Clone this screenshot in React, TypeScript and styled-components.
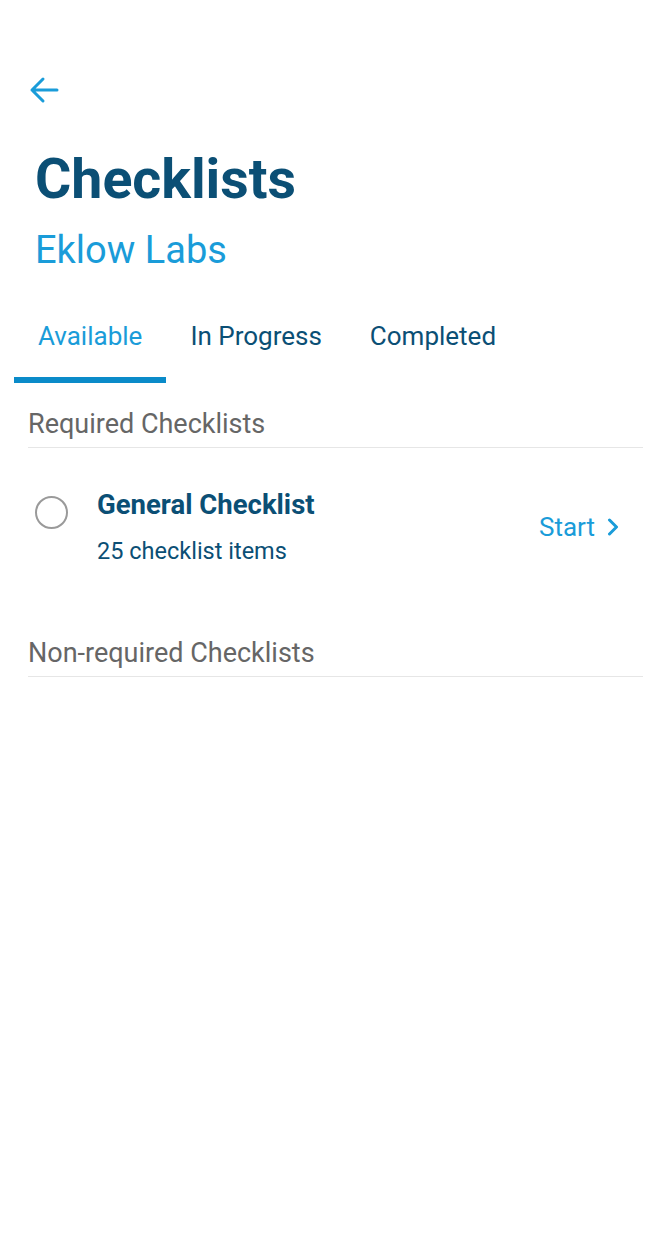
import React, { useState } from "react";
import styled, { createGlobalStyle } from "styled-components";

const GlobalStyle = createGlobalStyle`
  html, body {
    margin: 0;
    padding: 0;
    background: #fff;
  }

  body {
    font-family: Roboto, "Noto Sans", "Liberation Sans", sans-serif;
  }
`;

const Page = styled.div`
  display: flex;
  flex-direction: column;
  width: 670px;
  min-height: 1242px;
  background: #fff;
`;

const Header = styled.header`
  display: flex;
  flex-direction: column;
  padding: 76px 0 0 35px;
`;

const BackButton = styled.button`
  display: flex;
  align-items: center;
  justify-content: center;
  width: 32px;
  height: 28px;
  margin-left: -7px;
  padding: 0;
  border: none;
  background: none;
  cursor: pointer;
`;

const Title = styled.h1`
  margin: 44px 0 0;
  font-size: 55.5px;
  line-height: 64px;
  font-weight: 700;
  color: #0b4f75;
`;

const Subtitle = styled.h2`
  margin: 16px 0 0;
  font-size: 38px;
  line-height: 44px;
  font-weight: 400;
  color: #1a9cd9;
`;

const TabBar = styled.nav`
  display: flex;
  margin: 49px 0 0 14px;
`;

const Tab = styled.button<{ active?: boolean }>`
  display: flex;
  align-items: flex-start;
  padding: 0 24px;
  height: 62px;
  border: none;
  border-bottom: 6px solid ${({ active }) => (active ? "#0a8bc9" : "transparent")};
  background: none;
  font-family: inherit;
  font-size: 26px;
  line-height: 30px;
  color: ${({ active }) => (active ? "#1a9cd9" : "#0b4f75")};
  cursor: pointer;
`;

const Section = styled.section`
  display: flex;
  flex-direction: column;
  padding: 0 27px 0 28px;
`;

const SectionTitle = styled.div`
  padding: 26px 0 8px;
  border-bottom: 1px solid #e6e6e6;
  font-size: 27px;
  line-height: 30px;
  color: #666;
`;

const Row = styled.div`
  display: flex;
  align-items: center;
  padding: 42px 24px 48px 7px;
`;

const Radio = styled.span`
  flex: none;
  width: 29px;
  height: 29px;
  margin-top: -30px;
  border: 2.5px solid #9a9a9a;
  border-radius: 50%;
`;

const RowText = styled.div`
  display: flex;
  flex-direction: column;
  flex: 1;
  margin-left: 29px;
`;

const RowTitle = styled.div`
  font-size: 27.5px;
  line-height: 30px;
  font-weight: 700;
  color: #0b4f75;
`;

const RowMeta = styled.div`
  margin-top: 18px;
  font-size: 23.5px;
  line-height: 26px;
  color: #0b4f75;
`;

const StartLink = styled.a`
  display: flex;
  align-items: center;
  gap: 12px;
  font-size: 26px;
  line-height: 30px;
  color: #1a9cd9;
  cursor: pointer;
`;

const tabs = ["Available", "In Progress", "Completed"];

export default function App() {
  const [active, setActive] = useState("Available");

  return (
    <Page>
      <GlobalStyle />
      <Header>
        <BackButton aria-label="Back">
          <svg width="30" height="28" viewBox="0 0 30 28" fill="none">
            <path
              d="M28 14H3M14 3L3 14L14 25"
              stroke="#1a9cd9"
              strokeWidth="3"
              strokeLinecap="round"
              strokeLinejoin="round"
            />
          </svg>
        </BackButton>
        <Title>Checklists</Title>
        <Subtitle>Eklow Labs</Subtitle>
      </Header>

      <TabBar>
        {tabs.map(t => (
          <Tab key={t} active={t === active} onClick={() => setActive(t)}>
            {t}
          </Tab>
        ))}
      </TabBar>

      <Section>
        <SectionTitle>Required Checklists</SectionTitle>
        <Row>
          <Radio />
          <RowText>
            <RowTitle>General Checklist</RowTitle>
            <RowMeta>25 checklist items</RowMeta>
          </RowText>
          <StartLink>
            Start
            <svg width="12" height="18" viewBox="0 0 12 18" fill="none">
              <path
                d="M2.5 2L9.5 9L2.5 16"
                stroke="#1a9cd9"
                strokeWidth="3"
                strokeLinecap="round"
                strokeLinejoin="round"
              />
            </svg>
          </StartLink>
        </Row>
      </Section>

      <Section>
        <SectionTitle>Non-required Checklists</SectionTitle>
      </Section>
    </Page>
  );
}
